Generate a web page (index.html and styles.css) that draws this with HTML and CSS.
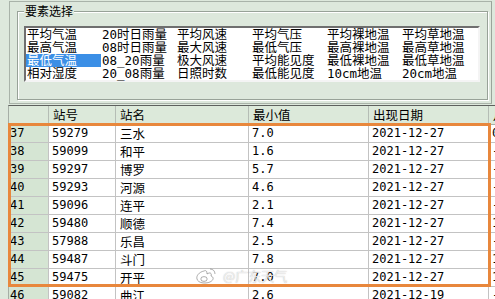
FILE: index.html
```html
<!DOCTYPE html>
<html lang="zh-CN">
<head>
<meta charset="utf-8">
<title>要素选择</title>
<link rel="stylesheet" href="styles.css">
</head>
<body>
<div class="screen">
  <div class="panel">
    <div class="group">
      <span class="legend">要素选择</span>
      <div class="listbox">
        <div class="item">平均气温</div>
        <div class="item">最高气温</div>
        <div class="item selected">最低气温</div>
        <div class="item">相对湿度</div>
        <div class="item">20时日雨量</div>
        <div class="item">08时日雨量</div>
        <div class="item">08_20雨量</div>
        <div class="item">20_08雨量</div>
        <div class="item">平均风速</div>
        <div class="item">最大风速</div>
        <div class="item">极大风速</div>
        <div class="item">日照时数</div>
        <div class="item">平均气压</div>
        <div class="item">最低气压</div>
        <div class="item">平均能见度</div>
        <div class="item">最低能见度</div>
        <div class="item">平均裸地温</div>
        <div class="item">最高裸地温</div>
        <div class="item">最低裸地温</div>
        <div class="item">10cm地温</div>
        <div class="item">平均草地温</div>
        <div class="item">最高草地温</div>
        <div class="item">最低草地温</div>
        <div class="item">20cm地温</div>
      </div>
    </div>
  </div>
  <table class="grid">
    <thead>
      <tr><th class="c0"></th><th class="c1">站号</th><th class="c2">站名</th><th class="c3">最小值</th><th class="c4">出现日期</th><th class="c5">月份</th></tr>
    </thead>
    <tbody>
      <tr><td class="rn">37</td><td>59279</td><td class="nm">三水</td><td>7.0</td><td>2021-12-27</td><td>0</td></tr>
      <tr><td class="rn">38</td><td>59099</td><td class="nm">和平</td><td>1.6</td><td>2021-12-27</td><td>-</td></tr>
      <tr><td class="rn">39</td><td>59297</td><td class="nm">博罗</td><td>5.7</td><td>2021-12-27</td><td>-</td></tr>
      <tr><td class="rn">40</td><td>59293</td><td class="nm">河源</td><td>4.6</td><td>2021-12-27</td><td>-</td></tr>
      <tr><td class="rn">41</td><td>59096</td><td class="nm">连平</td><td>2.1</td><td>2021-12-27</td><td>-</td></tr>
      <tr><td class="rn">42</td><td>59480</td><td class="nm">顺德</td><td>7.4</td><td>2021-12-27</td><td>1</td></tr>
      <tr><td class="rn">43</td><td>57988</td><td class="nm">乐昌</td><td>2.5</td><td>2021-12-27</td><td>-</td></tr>
      <tr><td class="rn">44</td><td>59487</td><td class="nm">斗门</td><td>7.8</td><td>2021-12-27</td><td>1</td></tr>
      <tr><td class="rn">45</td><td>59475</td><td class="nm">开平</td><td>7.0</td><td>2021-12-27</td><td>1</td></tr>
      <tr><td class="rn">46</td><td>59082</td><td class="nm">曲江</td><td>2.6</td><td>2021-12-19</td><td>-</td></tr>
    </tbody>
  </table>
  <div class="highlight"></div>
  <div class="watermark">
    <svg class="wb" width="22" height="18" viewBox="0 0 22 18">
      <path d="M9 4 C4 5 1 9 2 12 C3 16 10 17 15 15 C19 13 19 10 16 9 C17 6 15 5 12 7 C12 4 11 3 9 4 Z" fill="rgba(255,255,255,0.8)" stroke="rgba(120,120,120,0.6)" stroke-width="1"/>
      <ellipse cx="9" cy="12" rx="3.2" ry="2.4" fill="none" stroke="rgba(120,120,120,0.6)" stroke-width="1"/>
      <path d="M15 2 C18 2 20 4 20 7" fill="none" stroke="rgba(120,120,120,0.6)" stroke-width="1"/>
    </svg>
    <span class="wm-text">@广东天气</span>
  </div>
</div>
</body>
</html>
```

FILE: styles.css
```css
html, body {
  margin: 0;
  padding: 0;
  background: #dde8dc;
}

.screen {
  position: relative;
  width: 495px;
  height: 299px;
  overflow: hidden;
  background: #dde8dc;
  font-family: "Noto Sans CJK SC", sans-serif;
  color: #000;
}

.panel {
  box-sizing: border-box;
  margin: 1px 0 0 9px;
  width: 483px;
  height: 103px;
  border: 1px solid #a9b3a9;
  border-right-color: #9aa49a;
  padding: 9px 3px 3px 7px;
}

.group {
  position: relative;
  box-sizing: border-box;
  width: 471px;
  height: 89px;
  border: 1px solid #98a298;
  box-shadow: inset 1px 1px 0 #ffffff, 1px 1px 0 #ffffff;
  padding: 14px 0 0 6px;
}

.legend {
  position: absolute;
  left: 6px;
  top: -9px;
  padding: 0 1px;
  background: #dde8dc;
  font-size: 12px;
  line-height: 16px;
}

.listbox {
  box-sizing: border-box;
  width: 456px;
  height: 56px;
  background: #fff;
  border: 2px solid;
  border-color: #6f6f6f #f4f4f4 #f4f4f4 #6f6f6f;
  display: grid;
  grid-template-rows: repeat(4, 13px);
  grid-auto-flow: column;
  grid-auto-columns: 75px;
  font-family: "DejaVu Sans Mono", "Noto Sans CJK SC", monospace;
  font-size: 12.5px;
  line-height: 13px;
}

.item {
  white-space: nowrap;
  padding-left: 1px;
}

.item.selected {
  background: #3b8fe6;
  color: #fff;
}

.grid {
  box-sizing: border-box;
  margin: 1px 0 0 8px;
  width: 581px;
  table-layout: fixed;
  border-collapse: separate;
  border-spacing: 0;
  border-left: 1px solid #a6aea6;
  border-top: 1px solid #5e615e;
  font-family: "DejaVu Sans Mono", "Noto Sans CJK SC", monospace;
  font-size: 12px;
  background: #fff;
}

.grid th,
.grid td {
  box-sizing: border-box;
  padding: 0 0 0 3px;
  border-right: 1px solid #c3c3c3;
  border-bottom: 1px solid #c3c3c3;
  text-align: left;
  white-space: nowrap;
  overflow: hidden;
}

.grid th {
  height: 19px;
  line-height: 18px;
  background: #dce9da;
  font-weight: normal;
  font-family: "Noto Sans CJK SC", sans-serif;
  font-size: 12.5px;
  padding-left: 4px;
  border-right-color: #b5bdb5;
  border-bottom-color: #a8b0a8;
}

.grid td {
  height: 18px;
  line-height: 17px;
}

.c0 { width: 40px; }
.c1 { width: 67px; }
.c2 { width: 133px; }
.c3 { width: 120px; }
.c4 { width: 120px; }
.c5 { width: 100px; }

.grid td.rn {
  background: #d5e5d3;
  padding-left: 1px;
}

.grid td.nm {
  font-family: "Noto Sans CJK SC", sans-serif;
  font-size: 12.5px;
  padding-left: 4px;
}

.highlight {
  position: absolute;
  left: 8px;
  top: 123px;
  width: 483px;
  height: 164px;
  box-sizing: border-box;
  border: 3px solid #e8873c;
  pointer-events: none;
}

.watermark {
  position: absolute;
  left: 195px;
  top: 267px;
  display: flex;
  align-items: center;
  gap: 6px;
  pointer-events: none;
}

.wm-text {
  font-family: "Noto Sans CJK SC", sans-serif;
  font-size: 13px;
  line-height: 18px;
  color: rgba(255, 255, 255, 0.75);
  text-shadow: 0 0 1px rgba(90, 90, 90, 0.5);
}
```
